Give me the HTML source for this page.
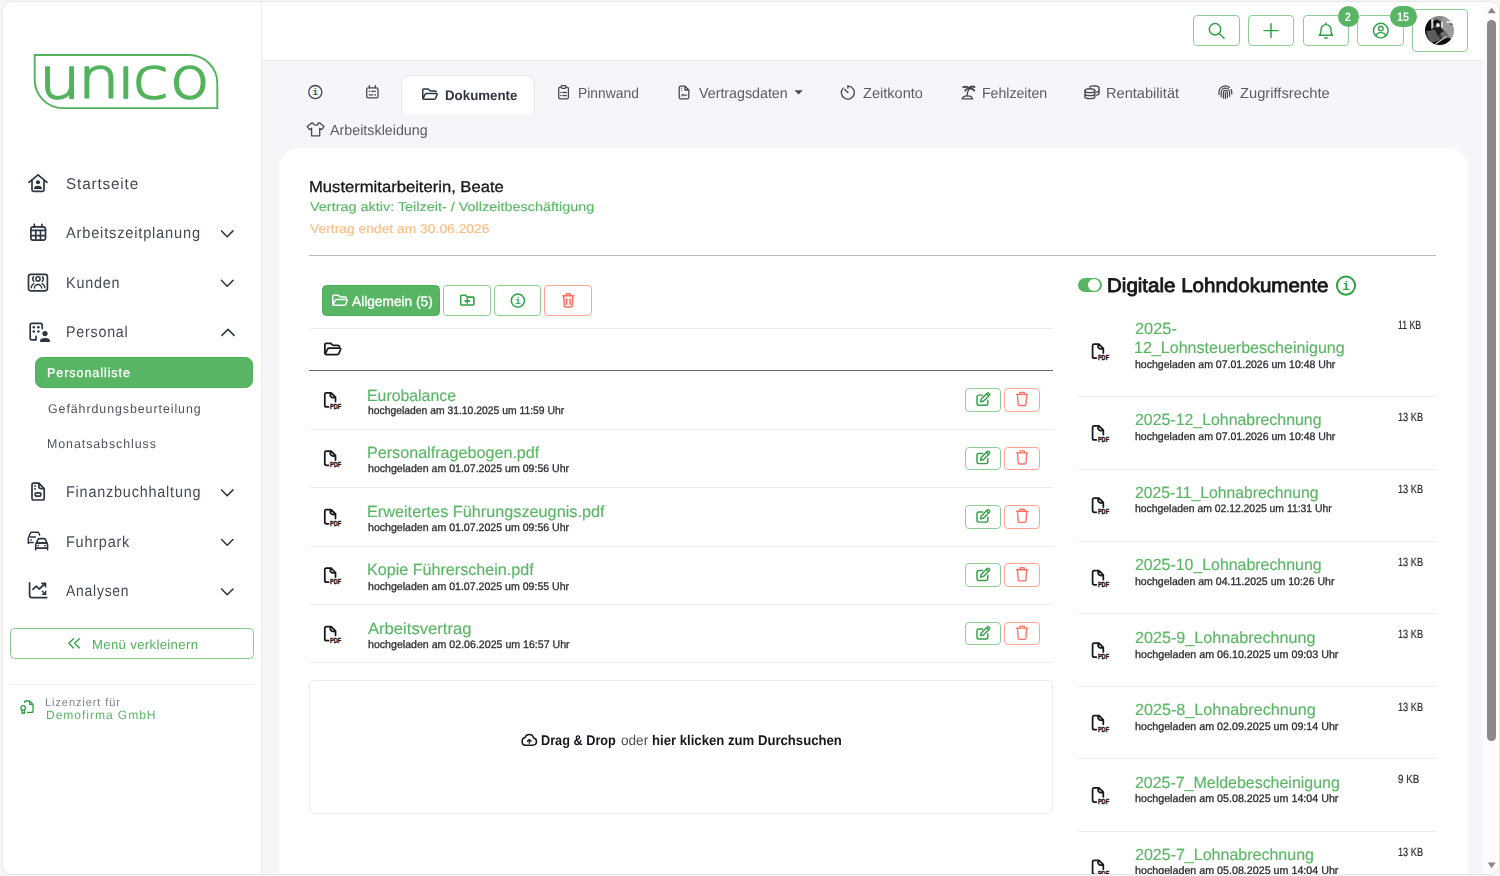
<!DOCTYPE html>
<html lang="de">
<head>
<meta charset="utf-8">
<title>unico – Personalliste – Dokumente</title>
<style>
html,body{margin:0;padding:0}
body{width:1500px;height:876px;overflow:hidden;background:#f6f6f6;position:relative;
  font-family:"Liberation Sans",sans-serif;}
ul,li,nav,aside,header,main,section,h1,h2,h3,p{margin:0;padding:0;list-style:none;font-weight:normal;font-size:inherit}
a{text-decoration:none;color:inherit}
#win{position:absolute;left:3px;top:2px;width:1495.5px;height:871.7px;border-radius:9px;overflow:hidden;
  background:#f5f6fa;box-shadow:0 0 0 1px #e9e9e9,0 0 2px 1px #efefef;}
#app{position:absolute;left:-3px;top:-2px;width:1500px;height:876px}
.a{position:absolute;box-sizing:border-box}
.t{white-space:nowrap;line-height:1;text-rendering:geometricPrecision;transform-origin:0 0;display:block}
.i{overflow:visible}
.btn{border:1px solid #8fcd97;border-radius:4px;background:#fff}
.btn.red{border-color:#ffa298}
.sep{height:1px;background:#eceef1}

</style>
</head>
<body>
<div id="win"><div id="app">
<aside class="sidebar">
<div class="a" style="left:2px;top:2px;width:260px;height:872px;background:#fff;border-right:1px solid #eaebee"></div>
<a class="logo"><svg class="a i" style="left:30px;top:50px" width="192" height="63" viewBox="30 50 192 63" fill="none" stroke="#53b35d" stroke-width="1.5" stroke-linecap="round" stroke-linejoin="round" ><defs><clipPath id="lgc"><rect x="30" y="62.6" width="192" height="46"/></clipPath></defs><path d="M34.7 55 H189 A28.3 28.3 0 0 1 217.3 83.3 V108.1 H63 A28.3 28.3 0 0 1 34.7 79.8 Z" stroke-width="1.9" stroke-linejoin="miter"/><g clip-path="url(#lgc)"><text transform="scale(1.148 1)" x="34.02 67.95 101.97 115.69 147.85" y="97.85" font-family="DejaVu Sans Light, DejaVu Sans, sans-serif" font-weight="200" font-size="57" fill="#53b35d" stroke="#53b35d" stroke-width="1.7" stroke-linejoin="round">unico</text></g></svg></a>
<nav><ul>
<li><svg class="a i" style="left:26px;top:172px" width="24" height="22" viewBox="26 172 24 22" fill="none" stroke="#2d3541" stroke-width="1.7" stroke-linecap="round" stroke-linejoin="round" ><path d="M28.9 182.3 L38 174.9 L47.1 182.3"/><path d="M32 180.4 V189.8 Q32 191.4 33.6 191.4 H42.4 Q44 191.4 44 189.8 V180.4"/><circle cx="38" cy="182.3" r="2.05" fill="#2d3541" stroke="none"/><path d="M33.9 189.1 A4.1 3.4 0 0 1 42.1 189.1 Z" fill="#2d3541" stroke="none"/></svg><span class="a t" style="left:65.90px;top:176.70px;font-size:15.6px;color:#444b55;transform:scaleX(0.9815);letter-spacing:0.85px">Startseite</span></li>
<li><svg class="a i" style="left:28px;top:222px" width="20" height="21" viewBox="28 222 20 21" fill="none" stroke="#2d3541" stroke-width="1.7" stroke-linecap="round" stroke-linejoin="round" ><rect x="30.9" y="226.9" width="14.6" height="13.3" rx="2.2"/><path d="M34.3 224.4 V226.9 M41.9 224.4 V226.9 M30.9 230.4 H45.5 M30.9 235.6 H45.5 M35.8 230.4 V240.2 M40.5 230.4 V240.2"/></svg><span class="a t" style="left:66.20px;top:225.70px;font-size:15.6px;color:#444b55;transform:scaleX(0.9389);letter-spacing:0.85px">Arbeitszeitplanung</span><svg class="a i" style="left:219px;top:229px" width="16" height="10" viewBox="219 229 16 10" fill="none" stroke="#2d3541" stroke-width="1.5" stroke-linecap="round" stroke-linejoin="round" ><path d="M221.6 230.9 L227.2 236.8 L233.0 230.9"/></svg></li>
<li><svg class="a i" style="left:26px;top:272px" width="24" height="21" viewBox="26 272 24 21" fill="none" stroke="#2d3541" stroke-width="1.7" stroke-linecap="round" stroke-linejoin="round" ><rect x="28.5" y="274.3" width="18.9" height="16.5" rx="2.2"/><g stroke-width="1.45"><circle cx="38" cy="278.9" r="2.1"/><path d="M34.4 288 A3.6 3.6 0 0 1 41.6 288"/><path d="M33.5 276.7 Q31.6 279.1 33.9 281.4 M42.5 276.7 Q44.4 279.1 42.1 281.4"/><path d="M31.2 287.8 Q31.3 285 33.8 283.7 M44.8 287.8 Q44.7 285 42.2 283.7"/></g></svg><span class="a t" style="left:65.68px;top:275.70px;font-size:15.6px;color:#444b55;transform:scaleX(0.9230);letter-spacing:0.85px">Kunden</span><svg class="a i" style="left:219px;top:278px" width="16" height="10" viewBox="219 278 16 10" fill="none" stroke="#2d3541" stroke-width="1.5" stroke-linecap="round" stroke-linejoin="round" ><path d="M221.6 280.4 L227.2 286.2 L233.0 280.4"/></svg></li>
<li class="open"><svg class="a i" style="left:28px;top:321px" width="24" height="23" viewBox="28 321 24 23" fill="none" stroke="#2d3541" stroke-width="1.7" stroke-linecap="round" stroke-linejoin="round" ><path d="M42.2 328.6 V325.1 Q42.2 323.4 40.5 323.4 H31.9 Q30.2 323.4 30.2 325.1 V338.1 Q30.2 339.8 31.9 339.8 H36 V336.4"/><g fill="#2d3541" stroke="none"><circle cx="33.8" cy="327.2" r="1.25"/><circle cx="38.4" cy="327.2" r="1.25"/><circle cx="33.8" cy="331.6" r="1.25"/><circle cx="38.4" cy="331.6" r="1.25"/><circle cx="45" cy="333.6" r="2.6"/><path d="M40 341.3 Q40 338.1 45 338.1 Q50 338.1 50 341.3 Q50 341.9 49.4 341.9 H40.6 Q40 341.9 40 341.3 Z"/></g></svg><span class="a t" style="left:65.69px;top:324.70px;font-size:15.6px;color:#444b55;transform:scaleX(0.9147);letter-spacing:0.85px">Personal</span><svg class="a i" style="left:220px;top:327px" width="17" height="10" viewBox="220 327 17 10" fill="none" stroke="#2d3541" stroke-width="1.5" stroke-linecap="round" stroke-linejoin="round" ><path d="M221.9 335.4 L228.0 329.4 L234.1 335.4"/></svg>
<ul class="sub">
<li class="active"><div class="a" style="left:35px;top:357px;width:218.2px;height:31px;background:#58b564;border:1px solid #4db058;border-radius:7.5px"></div><span class="a t" style="left:47.31px;top:367.10px;font-size:12.8px;color:#fff;transform:scaleX(0.9874);letter-spacing:0.9px;-webkit-text-stroke:0.3px #fff">Personalliste</span></li>
<li><span class="a t" style="left:47.80px;top:402.65px;font-size:12.7px;color:#4d525a;transform:scaleX(0.9780);letter-spacing:0.95px">Gefährdungsbeurteilung</span></li>
<li><span class="a t" style="left:47.02px;top:437.65px;font-size:12.7px;color:#4d525a;transform:scaleX(0.9784);letter-spacing:0.95px">Monatsabschluss</span></li>
</ul></li>
<li><svg class="a i" style="left:29px;top:480px" width="18" height="23" viewBox="29 480 18 23" fill="none" stroke="#2d3541" stroke-width="1.7" stroke-linecap="round" stroke-linejoin="round" ><path d="M38.8 483.2 H33.7 Q32 483.2 32 484.9 V498.3 Q32 500 33.7 500 H42.5 Q44.2 500 44.2 498.3 V488.7 Z"/><path d="M38.9 483.4 V486.4 Q38.9 488.6 41.1 488.6 H44"/><rect x="35.2" y="492.8" width="5.6" height="3.3" rx="1"/><circle cx="35" cy="485.9" r=".95" fill="#2d3541" stroke="none"/><circle cx="35" cy="488.9" r=".95" fill="#2d3541" stroke="none"/></svg><span class="a t" style="left:66.07px;top:484.70px;font-size:15.6px;color:#444b55;transform:scaleX(0.9255);letter-spacing:0.85px">Finanzbuchhaltung</span><svg class="a i" style="left:219px;top:488px" width="16" height="10" viewBox="219 488 16 10" fill="none" stroke="#2d3541" stroke-width="1.5" stroke-linecap="round" stroke-linejoin="round" ><path d="M221.6 489.9 L227.2 495.8 L233.0 489.9"/></svg></li>
<li><svg class="a i" style="left:26px;top:530px" width="24" height="22" viewBox="26 530 24 22" fill="none" stroke="#2d3541" stroke-width="1.6" stroke-linecap="round" stroke-linejoin="round" ><path d="M35.7 549.7 V544.3 L37.9 539.6 Q38.4 538.6 39.5 538.6 H43.9 Q45 538.6 45.5 539.6 L47.5 544.3 V549.7 M35.7 548.1 H47.5"/><path d="M36.7 542.9 H46.5" stroke-width="2"/><circle cx="38.2" cy="545.6" r=".9" fill="#2d3541" stroke="none"/><circle cx="45" cy="545.6" r=".9" fill="#2d3541" stroke="none"/><g stroke-width="1.45"><path d="M39.7 535.2 L38.9 533.2 Q38.5 532.2 37.4 532.2 H31.8 Q30.7 532.2 30.3 533.2 L28.3 538 V543.4 M30.3 537 H35.4 M28.5 542.4 H33.2"/></g><circle cx="31" cy="539.9" r=".8" fill="#2d3541" stroke="none"/></svg><span class="a t" style="left:65.67px;top:534.70px;font-size:15.6px;color:#444b55;transform:scaleX(0.9267);letter-spacing:0.85px">Fuhrpark</span><svg class="a i" style="left:219px;top:537px" width="16" height="10" viewBox="219 537 16 10" fill="none" stroke="#2d3541" stroke-width="1.5" stroke-linecap="round" stroke-linejoin="round" ><path d="M221.6 539.5 L227.2 545.2 L233.0 539.5"/></svg></li>
<li><svg class="a i" style="left:27px;top:580px" width="22" height="20" viewBox="27 580 22 20" fill="none" stroke="#2d3541" stroke-width="1.7" stroke-linecap="round" stroke-linejoin="round" ><path d="M29.6 582.9 V595.2 Q29.6 597.6 32 597.6 H46.7"/><path d="M32.9 589.4 L36.2 586.2 L39.2 589 L45.2 583.5 M42 583.3 H45.5 V586.7"/><path d="M42.3 591.3 L45.3 594 M45.6 591.3 V594.3 H42.5" stroke-width="1.4"/></svg><span class="a t" style="left:66.20px;top:583.70px;font-size:15.6px;color:#444b55;transform:scaleX(0.8930);letter-spacing:0.85px">Analysen</span><svg class="a i" style="left:219px;top:587px" width="16" height="10" viewBox="219 587 16 10" fill="none" stroke="#2d3541" stroke-width="1.5" stroke-linecap="round" stroke-linejoin="round" ><path d="M221.6 589.0 L227.2 594.8 L233.0 589.0"/></svg></li>
</ul></nav>
<a class="collapse"><div class="a" style="left:10px;top:628px;width:243.6px;height:30.8px;border:1px solid #86cb8f;border-radius:4.5px;background:#fff"></div><svg class="a i" style="left:66px;top:636px" width="16" height="14" viewBox="66 636 16 14" fill="none" stroke="#2fa044" stroke-width="1.35" stroke-linecap="round" stroke-linejoin="round" ><path d="M73.6 638.7 L68.8 643.3 L73.6 647.9 M79.4 638.7 L74.6 643.3 L79.4 647.9"/></svg><span class="a t" style="left:91.89px;top:638.00px;font-size:13.0px;color:#4eb15a;transform:scaleX(1.0093);letter-spacing:0.35px">Menü verkleinern</span></a>
<div class="a" style="left:10px;top:683.5px;width:243.6px;height:1px;background:#f0f1f3"></div>
<p class="license"><svg class="a i" style="left:19px;top:699px" width="16" height="16" viewBox="19 699 16 16" fill="none" stroke="#2fa044" stroke-width="1.3" stroke-linecap="round" stroke-linejoin="round" ><path d="M24.6 702.6 V702 Q24.6 701 25.6 701 H29.6 L33 704.4 V711.4 Q33 712.4 32 712.4 H27.3 M29.6 701.2 V704.4 H32.8"/><circle cx="23.2" cy="707.9" r="2.3"/><path d="M22 710.1 V713.5 L23.2 712.7 L24.4 713.5 V710.1"/></svg><span class="a t" style="left:44.80px;top:698.30px;font-size:11.4px;color:#7d8187;transform:scaleX(0.9670);letter-spacing:0.95px">Lizenziert für</span><span class="a t" style="left:45.50px;top:709.00px;font-size:12.0px;color:#5ab665;transform:scaleX(1.0049);letter-spacing:0.95px">Demofirma GmbH</span></p>
</aside>
<header class="topbar">
<div class="a" style="left:262px;top:2px;width:1222px;height:58.6px;background:#fff;border-bottom:1px solid #ecedf0"></div>
<a class="tb"><div class="a btn" style="left:1193px;top:15.2px;width:46.6px;height:30.4px;"></div><svg class="a i" style="left:1206px;top:20px" width="22" height="22" viewBox="1206 20 22 22" fill="none" stroke="#2fa044" stroke-width="1.45" stroke-linecap="round" stroke-linejoin="round" ><circle cx="1215" cy="29.2" r="5.7"/><path d="M1219.2 33.4 L1224.1 38.3"/></svg></a>
<a class="tb"><div class="a btn" style="left:1247.7px;top:15.2px;width:46.6px;height:30.4px;"></div><svg class="a i" style="left:1262px;top:22px" width="18" height="18" viewBox="1262 22 18 18" fill="none" stroke="#2fa044" stroke-width="1.45" stroke-linecap="round" stroke-linejoin="round" ><path d="M1264 30.6 H1278 M1271 23.6 V37.6"/></svg></a>
<a class="tb"><div class="a btn" style="left:1302.5px;top:15.2px;width:46.8px;height:30.4px;"></div><svg class="a i" style="left:1317px;top:21px" width="18" height="19" viewBox="1317 21 18 19" fill="none" stroke="#2fa044" stroke-width="1.4" stroke-linecap="round" stroke-linejoin="round" ><path d="M1319.3 35.2 Q1321 33.6 1321 30.4 V29.6 A5 5 0 0 1 1331 29.6 V30.4 Q1331 33.6 1332.7 35.2 Z"/><path d="M1326 23 V24.4 M1324.7 38 H1327.3"/></svg></a>
<a class="tb"><div class="a btn" style="left:1357.4px;top:15.2px;width:46.6px;height:30.4px;"></div><svg class="a i" style="left:1371px;top:21px" width="20" height="20" viewBox="1371 21 20 20" fill="none" stroke="#2fa044" stroke-width="1.4" stroke-linecap="round" stroke-linejoin="round" ><circle cx="1380.8" cy="30.6" r="7.3"/><circle cx="1380.8" cy="28.6" r="2.3"/><path d="M1376.1 36 Q1376.6 32.6 1380.8 32.6 Q1385 32.6 1385.5 36"/></svg></a>
<a class="tb"><div class="a btn" style="left:1412px;top:9.2px;width:56px;height:42.4px;"></div><svg class="a i" style="left:1424px;top:15px" width="32" height="32" viewBox="1424 15 32 32" fill="none"  ><defs><clipPath id="avc"><circle cx="1439.5" cy="30.5" r="14.5"/></clipPath><filter id="avb" x="-10%" y="-10%" width="120%" height="120%"><feGaussianBlur stdDeviation=".55"/></filter></defs><g clip-path="url(#avc)"><g filter="url(#avb)"><rect x="1423" y="14" width="34" height="34" fill="#3c3c3c"/><path d="M1431 14 H1452 V21 H1431 Z" fill="#858585"/><path d="M1441.5 18 L1456 18 L1456 41 L1448 38.5 L1443 29 Z" fill="#9b9b9b"/><path d="M1424 18 L1431 18 L1431.5 30 L1424 36 Z" fill="#080808"/><path d="M1431.3 19 H1433.2 V27.5 L1431.3 29 Z" fill="#d6d6d6"/><path d="M1441 21.5 H1443 V28.5 H1441 Z" fill="#cfcfcf"/><path d="M1446.5 21.3 H1451.5 V22.8 H1446.5 Z" fill="#f4f4f4"/><path d="M1450 23.5 H1454 V25 H1450 Z" fill="#5a5a5a"/><circle cx="1436.6" cy="22.6" r="3.1" fill="#0e0e0e"/><ellipse cx="1437.9" cy="25.2" rx="1.7" ry="2.1" fill="#f2f2f2"/><path d="M1433 28 L1441 27 L1443 33 L1437 36 Z" fill="#1c1c1c"/><path d="M1426 31 L1435 30 L1440 40 L1431 43 Z" fill="#5c5c5c"/><path d="M1440 33 L1446 31 L1449 37 L1443 39 Z" fill="#6f6f6f"/><path d="M1431 43 L1450 37.5 L1452 47 L1434 47 Z" fill="#080808"/><path d="M1435.5 44 L1446.5 36.5" stroke="#c4c4c4" stroke-width="1.3" fill="none"/></g></g></svg></a>
<div class="a badge" style="left:1337.9px;top:6px;width:21px;height:21px;background:#58b564;border-radius:10.5px"></div>
<span class="a t" style="left:1345.40px;top:10.90px;font-size:12.2px;color:#fff;transform:scaleX(0.8571);font-weight:700">2</span>
<div class="a badge" style="left:1390.2px;top:6px;width:26.4px;height:21px;background:#58b564;border-radius:10.5px"></div>
<span class="a t" style="left:1397.40px;top:10.90px;font-size:12.2px;color:#fff;transform:scaleX(0.8709);font-weight:700">15</span>
</header>
<main>
<ul class="tabs">
<li><svg class="a i" style="left:306px;top:83px" width="19" height="19" viewBox="306 83 19 19" fill="none" stroke="#45484d" stroke-width="1.3" stroke-linecap="round" stroke-linejoin="round" ><circle cx="315.3" cy="92.1" r="6.6"/><text x="315.3" y="95.23" text-anchor="middle" font-family="Liberation Mono, monospace" font-weight="700" font-size="9.2" fill="#45484d" stroke="none">i</text></svg></li>
<li><svg class="a i" style="left:364px;top:83px" width="17" height="18" viewBox="364 83 17 18" fill="none" stroke="#45484d" stroke-width="1.3" stroke-linecap="round" stroke-linejoin="round" ><rect x="366.7" y="87.8" width="11.3" height="10.1" rx="1.6"/><path d="M369.4 85.6 V87.8 M375.3 85.6 V87.8 M371.6 91.3 H375.3 M369.3 94.9 H372.8"/><circle cx="369.5" cy="91.3" r=".8" fill="#45484d" stroke="none"/><circle cx="375.2" cy="94.9" r=".8" fill="#45484d" stroke="none"/></svg></li>
<li class="active"><div class="a" style="left:400.5px;top:74.9px;width:134px;height:39.4px;background:#fff;border:1px solid #e4e6ea;border-bottom:none;border-radius:9px 9px 0 0"></div><svg class="a i" style="left:421px;top:87px" width="19" height="15" viewBox="421 87 19 15" fill="none" stroke="#2d3541" stroke-width="1.5" stroke-linecap="round" stroke-linejoin="round" ><path d="M422.75 97.82 V90.07 Q422.75 89.05 423.76 89.05 H427.50 Q428.51 89.05 429.23 89.97 Q429.95 90.89 431.10 90.89 H434.70 Q435.71 90.89 436.14 91.80 M423.18 98.54 L425.20 94.15 Q425.49 93.44 426.49 93.44 H436.29 Q437.44 93.44 437.15 94.35 L435.49 98.43 Q435.13 99.25 434.13 99.25 H423.90 Q422.75 99.25 422.75 97.82"/></svg><span class="a t" style="left:444.80px;top:88.65px;font-size:13.7px;color:#2d3541;transform:scaleX(0.9717);font-weight:700">Dokumente</span></li>
<li><svg class="a i" style="left:556px;top:83px" width="15" height="18" viewBox="556 83 15 18" fill="none" stroke="#45484d" stroke-width="1.3" stroke-linecap="round" stroke-linejoin="round" ><rect x="558.7" y="87.1" width="9.7" height="11.7" rx="1.6"/><rect x="561.3" y="85.6" width="4.5" height="2.7" rx=".8" fill="#f5f6fa"/><path d="M562.9 92.5 H566.3 M562.9 95.6 H566.3"/><circle cx="560.9" cy="92.5" r=".75" fill="#45484d" stroke="none"/><circle cx="560.9" cy="95.6" r=".75" fill="#45484d" stroke="none"/></svg><span class="a t" style="left:577.65px;top:86.70px;font-size:14.6px;color:#5a5d63;transform:scaleX(0.9495)">Pinnwand</span></li>
<li><svg class="a i" style="left:677px;top:84px" width="14" height="17" viewBox="677 84 14 17" fill="none" stroke="#45484d" stroke-width="1.3" stroke-linecap="round" stroke-linejoin="round" ><path d="M685 86.2 H680.8 Q679.2 86.2 679.2 87.8 V97.2 Q679.2 98.8 680.8 98.8 H687.2 Q688.8 98.8 688.8 97.2 V90 Z M685 86.4 V90 H688.6"/><path d="M681.4 96 L683 94.2 L684.5 95.8 L685.6 95 H686.9" stroke-width="1.1"/><circle cx="681.4" cy="88.3" r=".6" fill="#45484d" stroke="none"/><circle cx="681.4" cy="90.5" r=".6" fill="#45484d" stroke="none"/></svg><span class="a t" style="left:699.00px;top:86.70px;font-size:14.6px;color:#5a5d63;transform:scaleX(0.9763)">Vertragsdaten</span><svg class="a i" style="left:793px;top:89px" width="11" height="7" viewBox="793 89 11 7" fill="#45484d"  ><path d="M794.5 90.2 H802.7 L798.6 94.4 Z"/></svg></li>
<li><svg class="a i" style="left:839px;top:83px" width="18" height="18" viewBox="839 83 18 18" fill="none" stroke="#45484d" stroke-width="1.35" stroke-linecap="round" stroke-linejoin="round" ><path d="M847.9 86.1 A6.5 6.5 0 1 1 843.2 88.1 M847.9 85.6 V88 M847.9 92.6 L844.7 89.4"/></svg><span class="a t" style="left:862.60px;top:86.70px;font-size:14.6px;color:#5a5d63;transform:scaleX(0.9981)">Zeitkonto</span></li>
<li><svg class="a i" style="left:960px;top:83px" width="17" height="18" viewBox="960 83 17 18" fill="none" stroke="#45484d" stroke-width="1.3" stroke-linecap="round" stroke-linejoin="round" ><path d="M962 98.8 H972.7 M962.4 98.6 Q962.8 95.8 967.4 95.8 Q972 95.8 972.4 98.6"/><path d="M967 95.8 Q967.3 91.5 969.2 88.7"/><path d="M969.2 88.4 Q967 85.8 963.2 87.2 M969.2 88.4 Q970.6 85.7 974.5 87 M969.4 88.6 Q972.8 88.2 974.2 90.6 M969 88.6 Q966.2 88.4 965.2 90.6" stroke-width="1.9"/></svg><span class="a t" style="left:982.03px;top:86.70px;font-size:14.6px;color:#5a5d63;transform:scaleX(0.9665)">Fehlzeiten</span></li>
<li><svg class="a i" style="left:1083px;top:84px" width="18" height="17" viewBox="1083 84 18 17" fill="none" stroke="#45484d" stroke-width="1.45" stroke-linecap="round" stroke-linejoin="round" ><ellipse cx="1089.9" cy="90.7" rx="4.9" ry="1.9"/><path d="M1085 90.7 V96.7 A4.9 1.9 0 0 0 1094.8 96.7 V90.7 M1085 93.7 A4.9 1.9 0 0 0 1094.8 93.7"/><path d="M1089.6 87 A4.9 1.8 0 0 1 1099 87.6 V93.4 Q1099 94.6 1096.6 95.1 M1099 90.4 Q1099 91.6 1096.6 92.1"/></svg><span class="a t" style="left:1106.40px;top:86.70px;font-size:14.6px;color:#5a5d63;transform:scaleX(1.0006)">Rentabilität</span></li>
<li><svg class="a i" style="left:1217px;top:84px" width="17" height="17" viewBox="1217 84 17 17" fill="none" stroke="#45484d" stroke-width="1.25" stroke-linecap="round" stroke-linejoin="round" ><path d="M1219 94.6 V92.4 A6.4 6.4 0 0 1 1229.6 87.5 M1231.2 89.6 Q1231.9 91 1231.8 93.9 M1221.2 96.8 V92.4 A4.2 4.2 0 0 1 1229.6 92.4 V96.2 M1223.4 98.2 V92.4 A2 2 0 0 1 1227.4 92.4 V97.4 M1225.4 92.6 V98.6"/></svg><span class="a t" style="left:1240.00px;top:86.70px;font-size:14.6px;color:#5a5d63;transform:scaleX(1.0086)">Zugriffsrechte</span></li>
<li><svg class="a i" style="left:305px;top:120px" width="21" height="19" viewBox="305 120 21 19" fill="none" stroke="#45484d" stroke-width="1.3" stroke-linecap="round" stroke-linejoin="round" ><path d="M313 122.9 H311.6 L307.3 126.6 L309.6 129.6 L311.6 128.2 V135.9 H319.7 V128.2 L321.7 129.6 L324 126.6 L319.7 122.9 H318.3 A2.65 2.3 0 0 1 313 122.9 Z"/></svg><span class="a t" style="left:330.40px;top:123.70px;font-size:14.6px;color:#5a5d63;transform:scaleX(0.9793)">Arbeitskleidung</span></li>
</ul>
<section class="card">
<div class="a" style="left:279px;top:147.7px;width:1188.5px;height:760px;background:#fff;border-radius:20px"></div>
<h1 class="a t" style="left:308.53px;top:179.70px;font-size:15.6px;color:#16181b;transform:scaleX(1.0651);-webkit-text-stroke:0.3px #16181b">Mustermitarbeiterin, Beate</h1>
<p class="a t" style="left:309.60px;top:200.65px;font-size:12.7px;color:#5cb767;transform:scaleX(1.1363);-webkit-text-stroke:0.15px #5cb767">Vertrag aktiv: Teilzeit- / Vollzeitbeschäftigung</p>
<p class="a t" style="left:309.60px;top:222.65px;font-size:12.7px;color:#fdbc82;transform:scaleX(1.0919);-webkit-text-stroke:0.15px #fdbc82">Vertrag endet am 30.06.2026</p>
<div class="a" style="left:309px;top:255px;width:1127px;height:1.2px;background:#b9b9b9"></div>
<div class="toolbar">
<a><div class="a" style="left:322.2px;top:285.2px;width:118px;height:30.5px;background:#58b564;border:1px solid #4db058;border-radius:4.5px"></div><svg class="a i" style="left:331px;top:293px" width="19" height="15" viewBox="331 293 19 15" fill="none" stroke="#fff" stroke-width="1.5" stroke-linecap="round" stroke-linejoin="round" ><path d="M332.75 303.92 V296.17 Q332.75 295.15 333.76 295.15 H337.54 Q338.55 295.15 339.27 296.07 Q340.00 296.99 341.16 296.99 H344.79 Q345.80 296.99 346.24 297.90 M333.19 304.64 L335.21 300.25 Q335.50 299.54 336.52 299.54 H346.38 Q347.54 299.54 347.25 300.45 L345.58 304.53 Q345.22 305.35 344.20 305.35 H333.91 Q332.75 305.35 332.75 303.92"/></svg><span class="a t" style="left:352.00px;top:294.60px;font-size:13.8px;color:#fff;transform:scaleX(0.9940);-webkit-text-stroke:0.35px #fff">Allgemein (5)</span></a>
<a><div class="a btn" style="left:443.3px;top:285.2px;width:47.5px;height:30.5px;"></div><svg class="a i" style="left:459px;top:293px" width="17" height="14" viewBox="459 293 17 14" fill="none" stroke="#2fa044" stroke-width="1.6" stroke-linecap="round" stroke-linejoin="round" ><path d="M460.7 296.1 Q460.7 295.2 461.6 295.2 H465.4 L467 297.1 H473 Q473.9 297.1 473.9 298 V304.1 Q473.9 305 473 305 H461.6 Q460.7 305 460.7 304.1 Z M467.3 298.7 V303.1 M465.1 300.9 H469.5"/></svg></a>
<a><div class="a btn" style="left:494px;top:285.2px;width:47px;height:30.5px;"></div><svg class="a i" style="left:509px;top:292px" width="19" height="19" viewBox="509 292 19 19" fill="none" stroke="#2fa044" stroke-width="1.5" stroke-linecap="round" stroke-linejoin="round" ><circle cx="517.9" cy="300.6" r="6.6"/><text x="517.9" y="303.86" text-anchor="middle" font-family="Liberation Mono, monospace" font-weight="700" font-size="9.6" fill="#2fa044" stroke="none">i</text></svg></a>
<a><div class="a btn red" style="left:544.3px;top:285.2px;width:47.4px;height:30.5px;"></div><svg class="a i" style="left:561px;top:292px" width="16" height="18" viewBox="561 292 16 18" fill="none" stroke="#ff6f61" stroke-width="1.6" stroke-linecap="round" stroke-linejoin="round" ><path d="M562.7 295.8 H573.9 M566.0 295.8 V294.6 Q566.0 293.8 566.9 293.8 H569.7 Q570.6 293.8 570.6 294.6 V295.8 M563.7 296.1 L564.4 305.7 Q564.5 307.0 565.8 307.0 H570.8 Q572.1 307.0 572.2 305.7 L572.9 296.1 M566.6 299.1 V304.3 M570.0 299.1 V304.3"/></svg></a>
</div>
<ul class="docs">
<div class="a sep" style="left:309px;top:328.4px;width:743.6px;height:1px;"></div>
<li class="head"><svg class="a i" style="left:323px;top:341px" width="21" height="16" viewBox="323 341 21 16" fill="none" stroke="#15181c" stroke-width="1.75" stroke-linecap="round" stroke-linejoin="round" ><path d="M324.88 352.98 V344.58 Q324.88 343.48 325.98 343.48 H330.07 Q331.18 343.48 331.96 344.47 Q332.75 345.46 334.01 345.46 H337.95 Q339.05 345.46 339.52 346.46 M325.35 353.75 L327.55 349.00 Q327.87 348.23 328.97 348.23 H339.68 Q340.94 348.23 340.62 349.22 L338.81 353.64 Q338.42 354.53 337.32 354.53 H326.13 Q324.88 354.53 324.88 352.98"/></svg></li>
<div class="a" style="left:309px;top:370px;width:743.6px;height:1.2px;background:#6a6a6a"></div>
<li><svg class="a i" style="left:322px;top:390px" width="21" height="21" viewBox="322 390 21 21" fill="none" stroke="#15181c" stroke-width="1.75" stroke-linecap="round" stroke-linejoin="round" ><path d="M328.5 406.9 H326.5 Q324.8 406.9 324.8 405.2 V394.2 Q324.8 392.8 326.3 392.8 H331.1 L335.5 397.1 V401.6 M330.9 393.1 Q329.5 395.5 331.3 396.9 Q333.1 398.1 335.2 397.3"/><text x="330.1" y="408.8" font-family="Liberation Sans, sans-serif" font-size="6.4" font-weight="700" fill="#15181c" stroke="#15181c" stroke-width=".35" textLength="11.2" lengthAdjust="spacingAndGlyphs">PDF</text></svg><a class="a t" style="left:366.62px;top:387.90px;font-size:16.2px;color:#5ab665;transform:scaleX(0.9789);-webkit-text-stroke:0.15px #5ab665">Eurobalance</a><small class="a t" style="left:367.50px;top:405.55px;font-size:10.9px;color:#2b2e33;transform:scaleX(0.9510);-webkit-text-stroke:0.3px #2b2e33">hochgeladen am 31.10.2025 um 11:59 Uhr</small><div class="a btn" style="left:965px;top:388.1px;width:36.4px;height:23.5px;"></div><svg class="a i" style="left:975px;top:391px" width="18" height="17" viewBox="975 391 18 17" fill="none" stroke="#2fa044" stroke-width="1.45" stroke-linecap="round" stroke-linejoin="round" ><path d="M982.6 395.1 H978.8 Q977.0 395.1 977.0 396.9 V403.4 Q977.0 405.2 978.8 405.2 H986.0 Q987.8 405.2 987.8 403.4 V400.2 M980.6 401.8 L981.2 399.1 L987.2 393.2 Q988.2 392.5 989.2 393.4 Q990.1 394.4 989.3 395.4 L983.4 401.3 Z M986.5 394.1 L988.5 396.1"/></svg><div class="a btn red" style="left:1004px;top:388.1px;width:36px;height:23.5px;"></div><svg class="a i" style="left:1014px;top:390px" width="16" height="18" viewBox="1014 390 16 18" fill="none" stroke="#ff6f61" stroke-width="1.35" stroke-linecap="round" stroke-linejoin="round" ><path d="M1016.5 394.3 H1027.7 M1019.8 394.3 V393.1 Q1019.8 392.3 1020.7 392.3 H1023.5 Q1024.4 392.3 1024.4 393.1 V394.3 M1017.5 394.6 L1018.2 404.2 Q1018.3 405.5 1019.6 405.5 H1024.6 Q1025.9 405.5 1026.0 404.2 L1026.7 394.6"/></svg><div class="a sep" style="left:309px;top:428.6px;width:743.6px;height:1px;"></div></li>
<li><svg class="a i" style="left:322px;top:449px" width="21" height="21" viewBox="322 449 21 21" fill="none" stroke="#15181c" stroke-width="1.75" stroke-linecap="round" stroke-linejoin="round" ><path d="M328.5 465.3 H326.5 Q324.8 465.3 324.8 463.6 V452.6 Q324.8 451.2 326.3 451.2 H331.1 L335.5 455.5 V460.0 M330.9 451.5 Q329.5 453.9 331.3 455.3 Q333.1 456.5 335.2 455.7"/><text x="330.1" y="467.2" font-family="Liberation Sans, sans-serif" font-size="6.4" font-weight="700" fill="#15181c" stroke="#15181c" stroke-width=".35" textLength="11.2" lengthAdjust="spacingAndGlyphs">PDF</text></svg><a class="a t" style="left:366.60px;top:444.90px;font-size:16.2px;color:#5ab665;transform:scaleX(0.9971);-webkit-text-stroke:0.15px #5ab665">Personalfragebogen.pdf</a><small class="a t" style="left:367.50px;top:463.55px;font-size:10.9px;color:#2b2e33;transform:scaleX(0.9713);-webkit-text-stroke:0.3px #2b2e33">hochgeladen am 01.07.2025 um 09:56 Uhr</small><div class="a btn" style="left:965px;top:446.55px;width:36.4px;height:23.5px;"></div><svg class="a i" style="left:975px;top:449px" width="18" height="17" viewBox="975 449 18 17" fill="none" stroke="#2fa044" stroke-width="1.45" stroke-linecap="round" stroke-linejoin="round" ><path d="M982.6 453.5 H978.8 Q977.0 453.5 977.0 455.3 V461.8 Q977.0 463.6 978.8 463.6 H986.0 Q987.8 463.6 987.8 461.8 V458.6 M980.6 460.2 L981.2 457.5 L987.2 451.6 Q988.2 450.9 989.2 451.8 Q990.1 452.8 989.3 453.8 L983.4 459.8 Z M986.5 452.5 L988.5 454.5"/></svg><div class="a btn red" style="left:1004px;top:446.55px;width:36px;height:23.5px;"></div><svg class="a i" style="left:1014px;top:449px" width="16" height="18" viewBox="1014 449 16 18" fill="none" stroke="#ff6f61" stroke-width="1.35" stroke-linecap="round" stroke-linejoin="round" ><path d="M1016.5 452.8 H1027.7 M1019.8 452.8 V451.6 Q1019.8 450.8 1020.7 450.8 H1023.5 Q1024.4 450.8 1024.4 451.6 V452.8 M1017.5 453.1 L1018.2 462.7 Q1018.3 464.0 1019.6 464.0 H1024.6 Q1025.9 464.0 1026.0 462.7 L1026.7 453.1"/></svg><div class="a sep" style="left:309px;top:487.05px;width:743.6px;height:1px;"></div></li>
<li><svg class="a i" style="left:322px;top:507px" width="21" height="21" viewBox="322 507 21 21" fill="none" stroke="#15181c" stroke-width="1.75" stroke-linecap="round" stroke-linejoin="round" ><path d="M328.5 523.8 H326.5 Q324.8 523.8 324.8 522.1 V511.1 Q324.8 509.7 326.3 509.7 H331.1 L335.5 514.0 V518.5 M330.9 510.0 Q329.5 512.4 331.3 513.8 Q333.1 515.0 335.2 514.2"/><text x="330.1" y="525.7" font-family="Liberation Sans, sans-serif" font-size="6.4" font-weight="700" fill="#15181c" stroke="#15181c" stroke-width=".35" textLength="11.2" lengthAdjust="spacingAndGlyphs">PDF</text></svg><a class="a t" style="left:366.60px;top:503.90px;font-size:16.2px;color:#5ab665;transform:scaleX(1.0036);-webkit-text-stroke:0.15px #5ab665">Erweitertes Führungszeugnis.pdf</a><small class="a t" style="left:367.50px;top:522.55px;font-size:10.9px;color:#2b2e33;transform:scaleX(0.9713);-webkit-text-stroke:0.3px #2b2e33">hochgeladen am 01.07.2025 um 09:56 Uhr</small><div class="a btn" style="left:965px;top:505.0px;width:36.4px;height:23.5px;"></div><svg class="a i" style="left:975px;top:508px" width="18" height="17" viewBox="975 508 18 17" fill="none" stroke="#2fa044" stroke-width="1.45" stroke-linecap="round" stroke-linejoin="round" ><path d="M982.6 512.0 H978.8 Q977.0 512.0 977.0 513.8 V520.3 Q977.0 522.1 978.8 522.1 H986.0 Q987.8 522.1 987.8 520.3 V517.1 M980.6 518.7 L981.2 516.0 L987.2 510.1 Q988.2 509.4 989.2 510.3 Q990.1 511.3 989.3 512.3 L983.4 518.2 Z M986.5 511.0 L988.5 513.0"/></svg><div class="a btn red" style="left:1004px;top:505.0px;width:36px;height:23.5px;"></div><svg class="a i" style="left:1014px;top:507px" width="16" height="18" viewBox="1014 507 16 18" fill="none" stroke="#ff6f61" stroke-width="1.35" stroke-linecap="round" stroke-linejoin="round" ><path d="M1016.5 511.2 H1027.7 M1019.8 511.2 V510.0 Q1019.8 509.2 1020.7 509.2 H1023.5 Q1024.4 509.2 1024.4 510.0 V511.2 M1017.5 511.5 L1018.2 521.1 Q1018.3 522.4 1019.6 522.4 H1024.6 Q1025.9 522.4 1026.0 521.1 L1026.7 511.5"/></svg><div class="a sep" style="left:309px;top:545.5px;width:743.6px;height:1px;"></div></li>
<li><svg class="a i" style="left:322px;top:566px" width="21" height="21" viewBox="322 566 21 21" fill="none" stroke="#15181c" stroke-width="1.75" stroke-linecap="round" stroke-linejoin="round" ><path d="M328.5 582.2 H326.5 Q324.8 582.2 324.8 580.5 V569.5 Q324.8 568.1 326.3 568.1 H331.1 L335.5 572.5 V577.0 M330.9 568.5 Q329.5 570.9 331.3 572.2 Q333.1 573.5 335.2 572.6"/><text x="330.1" y="584.1" font-family="Liberation Sans, sans-serif" font-size="6.4" font-weight="700" fill="#15181c" stroke="#15181c" stroke-width=".35" textLength="11.2" lengthAdjust="spacingAndGlyphs">PDF</text></svg><a class="a t" style="left:366.60px;top:561.90px;font-size:16.2px;color:#5ab665;transform:scaleX(0.9960);-webkit-text-stroke:0.15px #5ab665">Kopie Führerschein.pdf</a><small class="a t" style="left:367.50px;top:581.55px;font-size:10.9px;color:#2b2e33;transform:scaleX(0.9713);-webkit-text-stroke:0.3px #2b2e33">hochgeladen am 01.07.2025 um 09:55 Uhr</small><div class="a btn" style="left:965px;top:563.45px;width:36.4px;height:23.5px;"></div><svg class="a i" style="left:975px;top:566px" width="18" height="17" viewBox="975 566 18 17" fill="none" stroke="#2fa044" stroke-width="1.45" stroke-linecap="round" stroke-linejoin="round" ><path d="M982.6 570.4 H978.8 Q977.0 570.4 977.0 572.2 V578.8 Q977.0 580.5 978.8 580.5 H986.0 Q987.8 580.5 987.8 578.8 V575.5 M980.6 577.1 L981.2 574.4 L987.2 568.5 Q988.2 567.8 989.2 568.8 Q990.1 569.8 989.3 570.8 L983.4 576.6 Z M986.5 569.4 L988.5 571.4"/></svg><div class="a btn red" style="left:1004px;top:563.45px;width:36px;height:23.5px;"></div><svg class="a i" style="left:1014px;top:565px" width="16" height="18" viewBox="1014 565 16 18" fill="none" stroke="#ff6f61" stroke-width="1.35" stroke-linecap="round" stroke-linejoin="round" ><path d="M1016.5 569.7 H1027.7 M1019.8 569.7 V568.5 Q1019.8 567.7 1020.7 567.7 H1023.5 Q1024.4 567.7 1024.4 568.5 V569.7 M1017.5 570.0 L1018.2 579.6 Q1018.3 580.9 1019.6 580.9 H1024.6 Q1025.9 580.9 1026.0 579.6 L1026.7 570.0"/></svg><div class="a sep" style="left:309px;top:603.95px;width:743.6px;height:1px;"></div></li>
<li><svg class="a i" style="left:322px;top:624px" width="21" height="21" viewBox="322 624 21 21" fill="none" stroke="#15181c" stroke-width="1.75" stroke-linecap="round" stroke-linejoin="round" ><path d="M328.5 640.7 H326.5 Q324.8 640.7 324.8 639.0 V628.0 Q324.8 626.6 326.3 626.6 H331.1 L335.5 630.9 V635.4 M330.9 626.9 Q329.5 629.3 331.3 630.7 Q333.1 631.9 335.2 631.1"/><text x="330.1" y="642.6" font-family="Liberation Sans, sans-serif" font-size="6.4" font-weight="700" fill="#15181c" stroke="#15181c" stroke-width=".35" textLength="11.2" lengthAdjust="spacingAndGlyphs">PDF</text></svg><a class="a t" style="left:367.60px;top:620.90px;font-size:16.2px;color:#5ab665;transform:scaleX(1.0265);-webkit-text-stroke:0.15px #5ab665">Arbeitsvertrag</a><small class="a t" style="left:367.50px;top:639.55px;font-size:10.9px;color:#2b2e33;transform:scaleX(0.9738);-webkit-text-stroke:0.3px #2b2e33">hochgeladen am 02.06.2025 um 16:57 Uhr</small><div class="a btn" style="left:965px;top:621.9000000000001px;width:36.4px;height:23.5px;"></div><svg class="a i" style="left:975px;top:625px" width="18" height="17" viewBox="975 625 18 17" fill="none" stroke="#2fa044" stroke-width="1.45" stroke-linecap="round" stroke-linejoin="round" ><path d="M982.6 628.9 H978.8 Q977.0 628.9 977.0 630.7 V637.2 Q977.0 639.0 978.8 639.0 H986.0 Q987.8 639.0 987.8 637.2 V634.0 M980.6 635.6 L981.2 632.9 L987.2 627.0 Q988.2 626.3 989.2 627.2 Q990.1 628.2 989.3 629.2 L983.4 635.1 Z M986.5 627.9 L988.5 629.9"/></svg><div class="a btn red" style="left:1004px;top:621.9000000000001px;width:36px;height:23.5px;"></div><svg class="a i" style="left:1014px;top:624px" width="16" height="18" viewBox="1014 624 16 18" fill="none" stroke="#ff6f61" stroke-width="1.35" stroke-linecap="round" stroke-linejoin="round" ><path d="M1016.5 628.1 H1027.7 M1019.8 628.1 V626.9 Q1019.8 626.1 1020.7 626.1 H1023.5 Q1024.4 626.1 1024.4 626.9 V628.1 M1017.5 628.4 L1018.2 638.0 Q1018.3 639.3 1019.6 639.3 H1024.6 Q1025.9 639.3 1026.0 638.0 L1026.7 628.4"/></svg><div class="a sep" style="left:309px;top:662.4000000000001px;width:743.6px;height:1px;"></div></li>
</ul>
<div class="dropzone"><div class="a" style="left:309px;top:680px;width:743.6px;height:133.5px;border:1px solid #efecec;border-radius:4.5px;background:#fff"></div><svg class="a i" style="left:520px;top:732px" width="19" height="16" viewBox="520 732 19 16" fill="none" stroke="#15181c" stroke-width="1.5" stroke-linecap="round" stroke-linejoin="round" ><path d="M525.6 745.2 H532.4 Q536.5 745.2 536.5 741.6 Q536.5 738.6 533.6 738.1 Q532.9 734.4 529.2 734.4 Q525.9 734.4 525 737.6 Q522.1 738 522.1 741.4 Q522.1 745.2 525.6 745.2 Z"/><path d="M529.3 743.2 V739.6 M527.5 741.2 L529.3 739.4 L531.1 741.2" stroke-width="1.3"/></svg><b class="a t" style="left:541.30px;top:732.95px;font-size:14.1px;color:#15181c;transform:scaleX(0.9018);font-weight:700">Drag &amp; Drop</b><span class="a t" style="left:620.50px;top:732.95px;font-size:14.1px;color:#4a4d52;transform:scaleX(0.9644)">oder</span><b class="a t" style="left:652.00px;top:732.95px;font-size:14.1px;color:#15181c;transform:scaleX(0.9324);font-weight:700">hier klicken zum Durchsuchen</b></div>
<div class="payroll">
<div class="a" style="left:1078.4px;top:278.4px;width:23.2px;height:14px;background:#58b564;border-radius:7px"></div><div class="a" style="left:1088px;top:279.4px;width:12px;height:12px;background:#fff;border-radius:50%"></div>
<h2 class="a t" style="left:1106.55px;top:277.20px;font-size:19.6px;color:#16181b;transform:scaleX(1.0474);-webkit-text-stroke:0.85px #16181b">Digitale Lohndokumente</h2>
<svg class="a i" style="left:1334px;top:274px" width="24" height="24" viewBox="1334 274 24 24" fill="none" stroke="#2fa044" stroke-width="2.0" stroke-linecap="round" stroke-linejoin="round" ><circle cx="1346" cy="285.6" r="9.1"/><text x="1346" y="289.85" text-anchor="middle" font-family="Liberation Mono, monospace" font-weight="700" font-size="12.5" fill="#2fa044" stroke="none">i</text></svg>
<ul>
<li>
<svg class="a i" style="left:1090px;top:342px" width="21" height="21" viewBox="1090 342 21 21" fill="none" stroke="#15181c" stroke-width="1.75" stroke-linecap="round" stroke-linejoin="round" ><path d="M1096.3 358.2 H1094.3 Q1092.6 358.2 1092.6 356.5 V345.5 Q1092.6 344.1 1094.1 344.1 H1098.9 L1103.3 348.4 V352.9 M1098.7 344.4 Q1097.3 346.8 1099.1 348.2 Q1100.9 349.4 1103.0 348.6"/><text x="1097.9" y="360.1" font-family="Liberation Sans, sans-serif" font-size="6.4" font-weight="700" fill="#15181c" stroke="#15181c" stroke-width=".35" textLength="11.2" lengthAdjust="spacingAndGlyphs">PDF</text></svg>
<a class="a t" style="left:1134.90px;top:320.90px;font-size:16.2px;color:#5ab665;transform:scaleX(1.0119);-webkit-text-stroke:0.15px #5ab665">2025-</a>
<a class="a t" style="left:1133.91px;top:339.90px;font-size:16.2px;color:#5ab665;transform:scaleX(0.9919);-webkit-text-stroke:0.15px #5ab665">12_Lohnsteuerbescheinigung</a>
<small class="a t" style="left:1134.90px;top:359.55px;font-size:10.9px;color:#2b2e33;transform:scaleX(0.9675);-webkit-text-stroke:0.3px #2b2e33">hochgeladen am 07.01.2026 um 10:48 Uhr</small>
<span class="a t" style="left:1398.40px;top:319.00px;font-size:12.0px;color:#2b2e33;transform:scaleX(0.7297);-webkit-text-stroke:0.2px #2b2e33">11 KB</span>
<div class="a sep" style="left:1077px;top:396.4px;width:359.4px;height:1px;"></div>
</li>
<li>
<svg class="a i" style="left:1090px;top:423px" width="21" height="21" viewBox="1090 423 21 21" fill="none" stroke="#15181c" stroke-width="1.75" stroke-linecap="round" stroke-linejoin="round" ><path d="M1096.3 439.9 H1094.3 Q1092.6 439.9 1092.6 438.2 V427.2 Q1092.6 425.8 1094.1 425.8 H1098.9 L1103.3 430.1 V434.6 M1098.7 426.1 Q1097.3 428.5 1099.1 429.9 Q1100.9 431.1 1103.0 430.3"/><text x="1097.9" y="441.8" font-family="Liberation Sans, sans-serif" font-size="6.4" font-weight="700" fill="#15181c" stroke="#15181c" stroke-width=".35" textLength="11.2" lengthAdjust="spacingAndGlyphs">PDF</text></svg>
<a class="a t" style="left:1134.90px;top:411.90px;font-size:16.2px;color:#5ab665;transform:scaleX(0.9819);-webkit-text-stroke:0.15px #5ab665">2025-12_Lohnabrechnung</a>
<small class="a t" style="left:1134.90px;top:431.55px;font-size:10.9px;color:#2b2e33;transform:scaleX(0.9675);-webkit-text-stroke:0.3px #2b2e33">hochgeladen am 07.01.2026 um 10:48 Uhr</small>
<span class="a t" style="left:1398.40px;top:411.00px;font-size:12.0px;color:#2b2e33;transform:scaleX(0.7649);-webkit-text-stroke:0.2px #2b2e33">13 KB</span>
<div class="a sep" style="left:1077px;top:469px;width:359.4px;height:1px;"></div>
</li>
<li>
<svg class="a i" style="left:1090px;top:496px" width="21" height="21" viewBox="1090 496 21 21" fill="none" stroke="#15181c" stroke-width="1.75" stroke-linecap="round" stroke-linejoin="round" ><path d="M1096.3 512.3 H1094.3 Q1092.6 512.3 1092.6 510.6 V499.6 Q1092.6 498.2 1094.1 498.2 H1098.9 L1103.3 502.5 V507.0 M1098.7 498.5 Q1097.3 500.9 1099.1 502.3 Q1100.9 503.5 1103.0 502.7"/><text x="1097.9" y="514.2" font-family="Liberation Sans, sans-serif" font-size="6.4" font-weight="700" fill="#15181c" stroke="#15181c" stroke-width=".35" textLength="11.2" lengthAdjust="spacingAndGlyphs">PDF</text></svg>
<a class="a t" style="left:1134.90px;top:484.90px;font-size:16.2px;color:#5ab665;transform:scaleX(0.9717);-webkit-text-stroke:0.15px #5ab665">2025-11_Lohnabrechnung</a>
<small class="a t" style="left:1134.90px;top:503.55px;font-size:10.9px;color:#2b2e33;transform:scaleX(0.9539);-webkit-text-stroke:0.3px #2b2e33">hochgeladen am 02.12.2025 um 11:31 Uhr</small>
<span class="a t" style="left:1398.40px;top:483.00px;font-size:12.0px;color:#2b2e33;transform:scaleX(0.7649);-webkit-text-stroke:0.2px #2b2e33">13 KB</span>
<div class="a sep" style="left:1077px;top:541px;width:359.4px;height:1px;"></div>
</li>
<li>
<svg class="a i" style="left:1090px;top:568px" width="21" height="21" viewBox="1090 568 21 21" fill="none" stroke="#15181c" stroke-width="1.75" stroke-linecap="round" stroke-linejoin="round" ><path d="M1096.3 584.8 H1094.3 Q1092.6 584.8 1092.6 583.1 V572.1 Q1092.6 570.7 1094.1 570.7 H1098.9 L1103.3 575.0 V579.5 M1098.7 571.0 Q1097.3 573.4 1099.1 574.8 Q1100.9 576.0 1103.0 575.2"/><text x="1097.9" y="586.7" font-family="Liberation Sans, sans-serif" font-size="6.4" font-weight="700" fill="#15181c" stroke="#15181c" stroke-width=".35" textLength="11.2" lengthAdjust="spacingAndGlyphs">PDF</text></svg>
<a class="a t" style="left:1134.90px;top:556.90px;font-size:16.2px;color:#5ab665;transform:scaleX(0.9824);-webkit-text-stroke:0.15px #5ab665">2025-10_Lohnabrechnung</a>
<small class="a t" style="left:1134.90px;top:576.55px;font-size:10.9px;color:#2b2e33;transform:scaleX(0.9669);-webkit-text-stroke:0.3px #2b2e33">hochgeladen am 04.11.2025 um 10:26 Uhr</small>
<span class="a t" style="left:1398.40px;top:556.00px;font-size:12.0px;color:#2b2e33;transform:scaleX(0.7649);-webkit-text-stroke:0.2px #2b2e33">13 KB</span>
<div class="a sep" style="left:1077px;top:613px;width:359.4px;height:1px;"></div>
</li>
<li>
<svg class="a i" style="left:1090px;top:641px" width="21" height="21" viewBox="1090 641 21 21" fill="none" stroke="#15181c" stroke-width="1.75" stroke-linecap="round" stroke-linejoin="round" ><path d="M1096.3 657.2 H1094.3 Q1092.6 657.2 1092.6 655.5 V644.5 Q1092.6 643.1 1094.1 643.1 H1098.9 L1103.3 647.4 V651.9 M1098.7 643.4 Q1097.3 645.8 1099.1 647.2 Q1100.9 648.4 1103.0 647.6"/><text x="1097.9" y="659.1" font-family="Liberation Sans, sans-serif" font-size="6.4" font-weight="700" fill="#15181c" stroke="#15181c" stroke-width=".35" textLength="11.2" lengthAdjust="spacingAndGlyphs">PDF</text></svg>
<a class="a t" style="left:1134.90px;top:629.90px;font-size:16.2px;color:#5ab665;transform:scaleX(0.9977);-webkit-text-stroke:0.15px #5ab665">2025-9_Lohnabrechnung</a>
<small class="a t" style="left:1134.90px;top:649.55px;font-size:10.9px;color:#2b2e33;transform:scaleX(0.9824);-webkit-text-stroke:0.3px #2b2e33">hochgeladen am 06.10.2025 um 09:03 Uhr</small>
<span class="a t" style="left:1398.40px;top:628.00px;font-size:12.0px;color:#2b2e33;transform:scaleX(0.7649);-webkit-text-stroke:0.2px #2b2e33">13 KB</span>
<div class="a sep" style="left:1077px;top:686px;width:359.4px;height:1px;"></div>
</li>
<li>
<svg class="a i" style="left:1090px;top:713px" width="21" height="21" viewBox="1090 713 21 21" fill="none" stroke="#15181c" stroke-width="1.75" stroke-linecap="round" stroke-linejoin="round" ><path d="M1096.3 729.6 H1094.3 Q1092.6 729.6 1092.6 727.9 V716.9 Q1092.6 715.5 1094.1 715.5 H1098.9 L1103.3 719.8 V724.3 M1098.7 715.8 Q1097.3 718.2 1099.1 719.6 Q1100.9 720.8 1103.0 720.0"/><text x="1097.9" y="731.5" font-family="Liberation Sans, sans-serif" font-size="6.4" font-weight="700" fill="#15181c" stroke="#15181c" stroke-width=".35" textLength="11.2" lengthAdjust="spacingAndGlyphs">PDF</text></svg>
<a class="a t" style="left:1134.90px;top:701.90px;font-size:16.2px;color:#5ab665;transform:scaleX(0.9988);-webkit-text-stroke:0.15px #5ab665">2025-8_Lohnabrechnung</a>
<small class="a t" style="left:1134.90px;top:721.55px;font-size:10.9px;color:#2b2e33;transform:scaleX(0.9824);-webkit-text-stroke:0.3px #2b2e33">hochgeladen am 02.09.2025 um 09:14 Uhr</small>
<span class="a t" style="left:1398.40px;top:701.00px;font-size:12.0px;color:#2b2e33;transform:scaleX(0.7649);-webkit-text-stroke:0.2px #2b2e33">13 KB</span>
<div class="a sep" style="left:1077px;top:758px;width:359.4px;height:1px;"></div>
</li>
<li>
<svg class="a i" style="left:1090px;top:786px" width="21" height="21" viewBox="1090 786 21 21" fill="none" stroke="#15181c" stroke-width="1.75" stroke-linecap="round" stroke-linejoin="round" ><path d="M1096.3 802.0 H1094.3 Q1092.6 802.0 1092.6 800.3 V789.3 Q1092.6 787.9 1094.1 787.9 H1098.9 L1103.3 792.2 V796.8 M1098.7 788.2 Q1097.3 790.6 1099.1 792.0 Q1100.9 793.2 1103.0 792.4"/><text x="1097.9" y="803.9" font-family="Liberation Sans, sans-serif" font-size="6.4" font-weight="700" fill="#15181c" stroke="#15181c" stroke-width=".35" textLength="11.2" lengthAdjust="spacingAndGlyphs">PDF</text></svg>
<a class="a t" style="left:1134.90px;top:774.90px;font-size:16.2px;color:#5ab665;transform:scaleX(0.9850);-webkit-text-stroke:0.15px #5ab665">2025-7_Meldebescheinigung</a>
<small class="a t" style="left:1134.90px;top:793.55px;font-size:10.9px;color:#2b2e33;transform:scaleX(0.9824);-webkit-text-stroke:0.3px #2b2e33">hochgeladen am 05.08.2025 um 14:04 Uhr</small>
<span class="a t" style="left:1398.40px;top:773.00px;font-size:12.0px;color:#2b2e33;transform:scaleX(0.8150);-webkit-text-stroke:0.2px #2b2e33">9 KB</span>
<div class="a sep" style="left:1077px;top:831px;width:359.4px;height:1px;"></div>
</li>
<li>
<svg class="a i" style="left:1090px;top:858px" width="21" height="21" viewBox="1090 858 21 21" fill="none" stroke="#15181c" stroke-width="1.75" stroke-linecap="round" stroke-linejoin="round" ><path d="M1096.3 874.5 H1094.3 Q1092.6 874.5 1092.6 872.8 V861.8 Q1092.6 860.4 1094.1 860.4 H1098.9 L1103.3 864.7 V869.2 M1098.7 860.7 Q1097.3 863.1 1099.1 864.5 Q1100.9 865.7 1103.0 864.9"/><text x="1097.9" y="876.4" font-family="Liberation Sans, sans-serif" font-size="6.4" font-weight="700" fill="#15181c" stroke="#15181c" stroke-width=".35" textLength="11.2" lengthAdjust="spacingAndGlyphs">PDF</text></svg>
<a class="a t" style="left:1134.90px;top:846.90px;font-size:16.2px;color:#5ab665;transform:scaleX(0.9893);-webkit-text-stroke:0.15px #5ab665">2025-7_Lohnabrechnung</a>
<small class="a t" style="left:1134.90px;top:865.55px;font-size:10.9px;color:#2b2e33;transform:scaleX(0.9824);-webkit-text-stroke:0.3px #2b2e33">hochgeladen am 05.08.2025 um 14:04 Uhr</small>
<span class="a t" style="left:1398.40px;top:846.00px;font-size:12.0px;color:#2b2e33;transform:scaleX(0.7649);-webkit-text-stroke:0.2px #2b2e33">13 KB</span>
<div class="a sep" style="left:1077px;top:903px;width:359.4px;height:1px;"></div>
</li>
</ul></div>
</section></main>
<div class="scrollbar"><div class="a" style="left:1483px;top:2px;width:16px;height:872px;background:#fcfcfc"></div><div class="a" style="left:1487.4px;top:19.5px;width:8.6px;height:721px;background:#8a8a8a;border-radius:4.3px"></div><svg class="a i" style="left:1486px;top:6px" width="12" height="9" viewBox="1486 6 12 9" fill="#8a8a8a"  ><path d="M1487.6 13.2 L1491.7 7.6 L1495.8 13.2 Z"/></svg><svg class="a i" style="left:1486px;top:861px" width="12" height="9" viewBox="1486 861 12 9" fill="#8a8a8a"  ><path d="M1487.6 862.6 L1491.7 868.2 L1495.8 862.6 Z"/></svg></div>
</div></div>
</body>
</html>
